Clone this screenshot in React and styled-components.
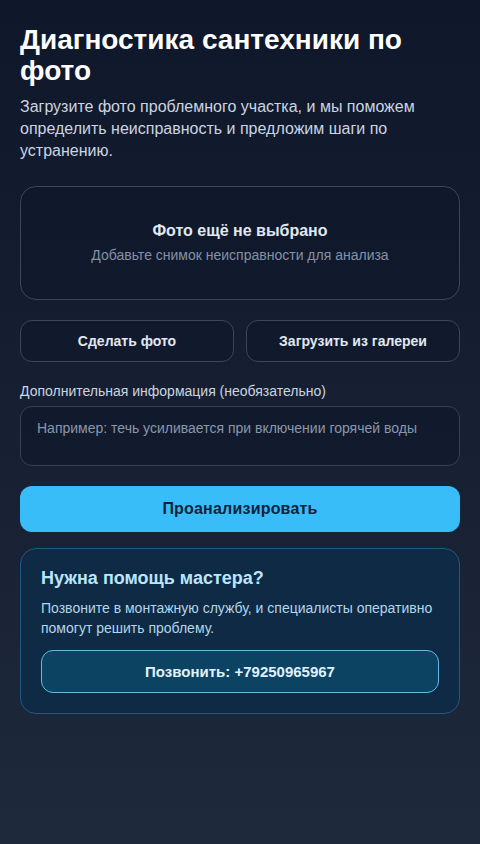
import styled, { createGlobalStyle } from "styled-components";
import { useState } from "react";

const GlobalStyle = createGlobalStyle`
  * { box-sizing: border-box; }
  html, body {
    margin: 0;
    padding: 0;
    min-height: 100%;
  }
  body {
    font-family: "Liberation Sans", Arial, sans-serif;
    background: linear-gradient(180deg, #0f172a 0%, #1e293b 100%);
    background-attachment: fixed;
    min-height: 844px;
    color: #f8fafc;
  }
`;

const Page = styled.main`
  min-height: 844px;
  padding: 25px 20px 24px;
  display: flex;
  flex-direction: column;
`;

const Title = styled.h1`
  margin: 0 0 9px;
  font-size: 28px;
  line-height: 1.1;
  font-weight: 700;
  color: #ffffff;
`;

const Lead = styled.p`
  margin: 0 0 23px;
  font-size: 16px;
  line-height: 1.4;
  color: #cbd5e1;
`;

const DropZone = styled.div`
  height: 114px;
  border: 1px solid #3b4659;
  border-radius: 16px;
  background: rgba(15, 23, 42, 0.55);
  display: flex;
  flex-direction: column;
  align-items: center;
  justify-content: center;
  gap: 3px;
  text-align: center;
`;

const DropTitle = styled.div`
  font-size: 16px;
  line-height: 1.4;
  font-weight: 700;
  color: #e2e8f0;
`;

const DropHint = styled.div`
  font-size: 14px;
  line-height: 20px;
  color: #8391a7;
`;

const ButtonRow = styled.div`
  margin-top: 20px;
  display: grid;
  grid-template-columns: 1fr 1fr;
  gap: 12px;
`;

const OutlineButton = styled.button`
  height: 42px;
  border: 1px solid #3b4659;
  border-radius: 12px;
  background: rgba(15, 23, 42, 0.6);
  color: #e2e8f0;
  font-family: inherit;
  font-size: 14px;
  font-weight: 700;
  cursor: pointer;
`;

const Label = styled.label`
  display: block;
  margin: 19px 0 5px;
  font-size: 14px;
  line-height: 20px;
  color: #cbd5e1;
`;

const Notes = styled.textarea`
  display: block;
  width: 100%;
  height: 60px;
  padding: 11px 16px;
  border: 1px solid #334155;
  border-radius: 12px;
  background: rgba(15, 23, 42, 0.6);
  color: #e2e8f0;
  font-family: inherit;
  font-size: 14px;
  line-height: 20px;
  resize: none;
  outline: none;
  &::placeholder {
    color: #8a97ab;
  }
`;

const PrimaryButton = styled.button`
  margin-top: 20px;
  height: 46px;
  border: none;
  border-radius: 12px;
  background: #38bdf8;
  color: #0c2340;
  font-family: inherit;
  font-size: 16px;
  font-weight: 700;
  letter-spacing: 0.2px;
  cursor: pointer;
`;

const HelpCard = styled.section`
  margin-top: 16px;
  padding: 20px;
  border: 1px solid #1f5a80;
  border-radius: 16px;
  background: #0e2a44;
`;

const HelpTitle = styled.h2`
  margin: 0 0 9px;
  font-size: 18px;
  line-height: 1.1;
  font-weight: 700;
  color: #bae6fd;
`;

const HelpText = styled.p`
  margin: 0 0 12px;
  font-size: 14px;
  line-height: 20px;
  color: #b4d6ea;
`;

const CallButton = styled.a`
  display: flex;
  align-items: center;
  justify-content: center;
  height: 43px;
  border: 1px solid #67b9e2;
  border-radius: 12px;
  background: #0c4363;
  color: #e0f2fe;
  font-size: 15px;
  font-weight: 700;
  text-decoration: none;
`;

export default function App() {
  const [notes, setNotes] = useState("");
  const phone = "+79250965967";

  return (
    <>
      <GlobalStyle />
      <Page>
        <Title>Диагностика сантехники по фото</Title>
        <Lead>
          Загрузите фото проблемного участка, и мы поможем определить
          неисправность и предложим шаги по устранению.
        </Lead>

        <DropZone>
          <DropTitle>Фото ещё не выбрано</DropTitle>
          <DropHint>Добавьте снимок неисправности для анализа</DropHint>
        </DropZone>

        <ButtonRow>
          <OutlineButton type="button">Сделать фото</OutlineButton>
          <OutlineButton type="button">Загрузить из галереи</OutlineButton>
        </ButtonRow>

        <Label htmlFor="notes">Дополнительная информация (необязательно)</Label>
        <Notes
          id="notes"
          value={notes}
          onChange={(e) => setNotes(e.target.value)}
          placeholder="Например: течь усиливается при включении горячей воды"
        />

        <PrimaryButton type="button">Проанализировать</PrimaryButton>

        <HelpCard>
          <HelpTitle>Нужна помощь мастера?</HelpTitle>
          <HelpText>
            Позвоните в монтажную службу, и специалисты оперативно помогут
            решить проблему.
          </HelpText>
          <CallButton href={`tel:${phone}`}>Позвонить: {phone}</CallButton>
        </HelpCard>
      </Page>
    </>
  );
}
